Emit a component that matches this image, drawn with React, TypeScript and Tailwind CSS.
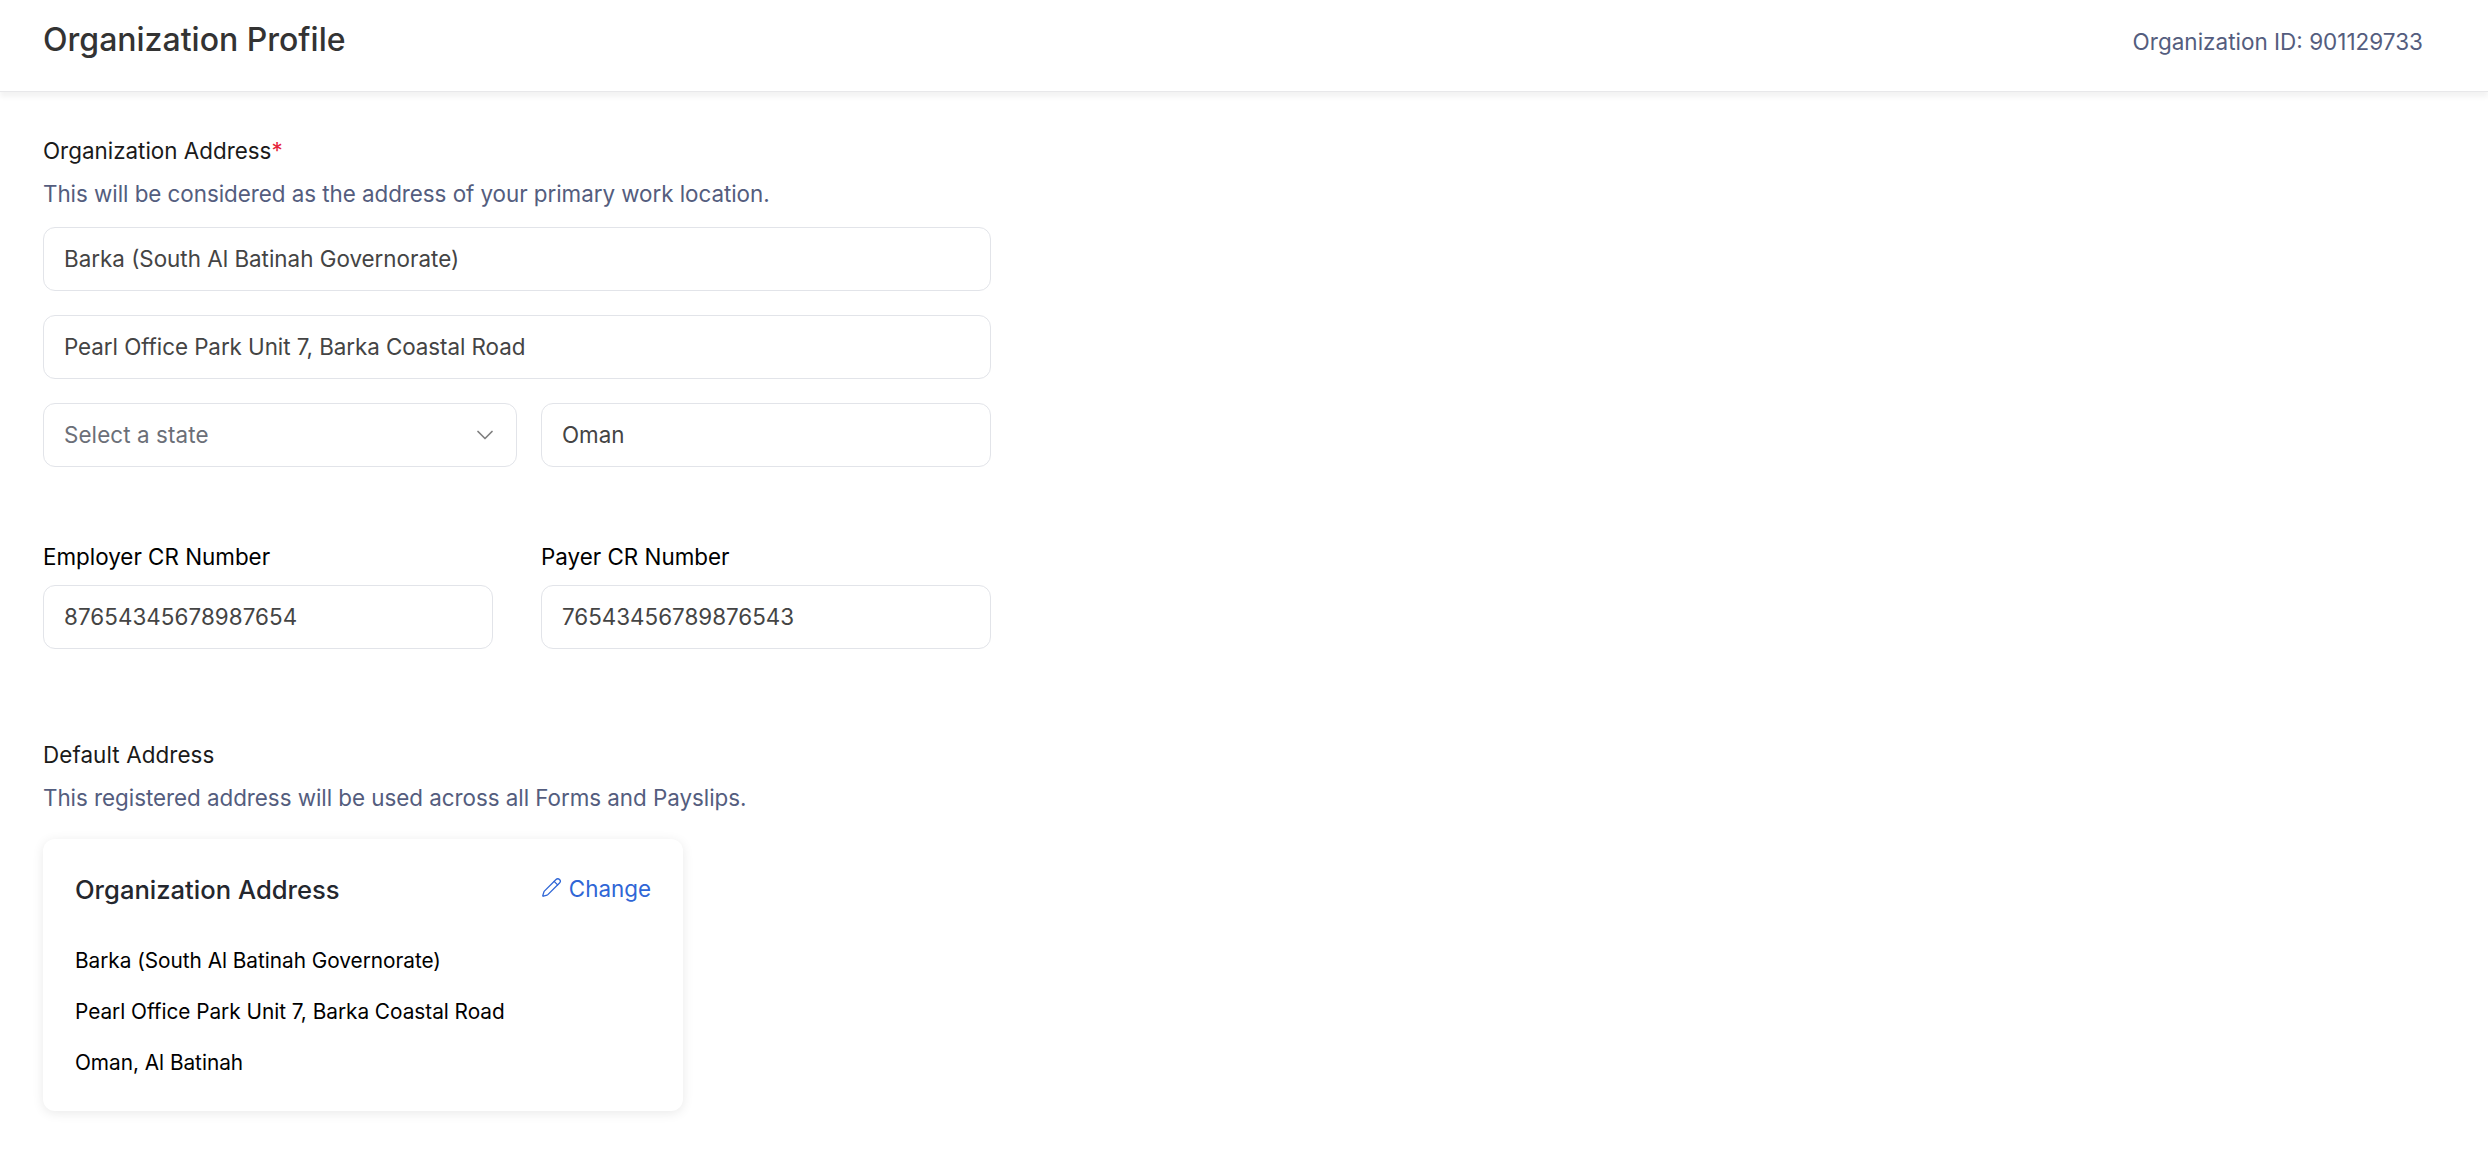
import { ChevronDown, Pencil } from "lucide-react";

function TextBox({ value, className = "" }: { value: string; className?: string }) {
  return (
    <div className={`flex h-[64px] items-center rounded-[12px] border border-[#e2e4e9] bg-white px-[20px] text-[22.4px] text-[#444444] ${className}`}>
      {value}
    </div>
  );
}

export default function App() {
  return (
    <div className="min-h-[1164px] bg-white font-['Inter',sans-serif]">
      <header className="flex h-[92px] items-start justify-between border-b border-[#e8e8ea] bg-white pl-[43px] pr-[65px] pt-[16px] shadow-[0_5px_5px_rgba(0,0,0,0.05)]">
        <h1 className="text-[32px] font-medium text-[#333333]">Organization Profile</h1>
        <span className="mt-[9px] text-[22.5px] text-[#545d7e]">Organization ID: 901129733</span>
      </header>

      <main className="pl-[43px] pt-[41px]">
        <div className="w-[948px]">
          <p className="text-[22.4px] leading-[36px] text-[#1a1a1a]">
            Organization Address<span className="text-[#e5233b]">*</span>
          </p>
          <p className="mt-[7px] text-[22.4px] leading-[36px] tracking-[-0.045px] text-[#545d7e]">
            This will be considered as the address of your primary work location.
          </p>
          <TextBox value="Barka (South Al Batinah Governorate)" className="mt-[15px]" />
          <TextBox value="Pearl Office Park Unit 7, Barka Coastal Road" className="mt-[24px] tracking-[-0.06px]" />
          <div className="mt-[24px] flex gap-[24px]">
            <div className="flex h-[64px] w-[474px] items-center justify-between rounded-[12px] border border-[#e2e4e9] bg-white pl-[20px] pr-[17px] text-[22.4px] tracking-[0.1px] text-[#6b6f78]">
              Select a state
              <ChevronDown className="h-[28px] w-[28px] text-[#808080]" strokeWidth={1.5} />
            </div>
            <TextBox value="Oman" className="flex-1" />
          </div>

          <div className="mt-[72px] flex gap-[48px]">
            <div className="flex-1">
              <p className="text-[22.4px] leading-[36px] text-black">Employer CR Number</p>
              <TextBox value="87654345678987654" className="mt-[10px] tracking-[0.06px]" />
            </div>
            <div className="flex-1">
              <p className="text-[22.4px] leading-[36px] text-black">Payer CR Number</p>
              <TextBox value="76543456789876543" className="mt-[10px]" />
            </div>
          </div>

          <p className="mt-[88px] text-[22.4px] leading-[36px] tracking-[0.1px] text-[#1a1a1a]">Default Address</p>
          <p className="mt-[7px] text-[22.4px] leading-[36px] tracking-[-0.04px] text-[#545d7e]">
            This registered address will be used across all Forms and Payslips.
          </p>
        </div>

        <section className="mt-[23px] w-[640px] rounded-[12px] bg-white px-[32px] pb-[30px] pt-[32px] shadow-[0_2px_12px_rgba(0,0,0,0.09)]">
          <div className="flex items-start justify-between">
            <h2 className="text-[25.6px] font-medium text-[#24272e]">Organization Address</h2>
            <button className="mt-[1px] flex items-center gap-[7px] text-[22.4px] text-[#2f66d6]">
              <Pencil className="mb-[3px] h-[21px] w-[21px]" strokeWidth={1.5} />
              Change
            </button>
          </div>
          <div className="mt-[34px] flex flex-col gap-[15px] text-[20.8px] leading-[36px] tracking-[-0.03px] text-black">
            <p>Barka (South Al Batinah Governorate)</p>
            <p>Pearl Office Park Unit 7, Barka Coastal Road</p>
            <p>Oman, Al Batinah</p>
          </div>
        </section>
      </main>
    </div>
  );
}
